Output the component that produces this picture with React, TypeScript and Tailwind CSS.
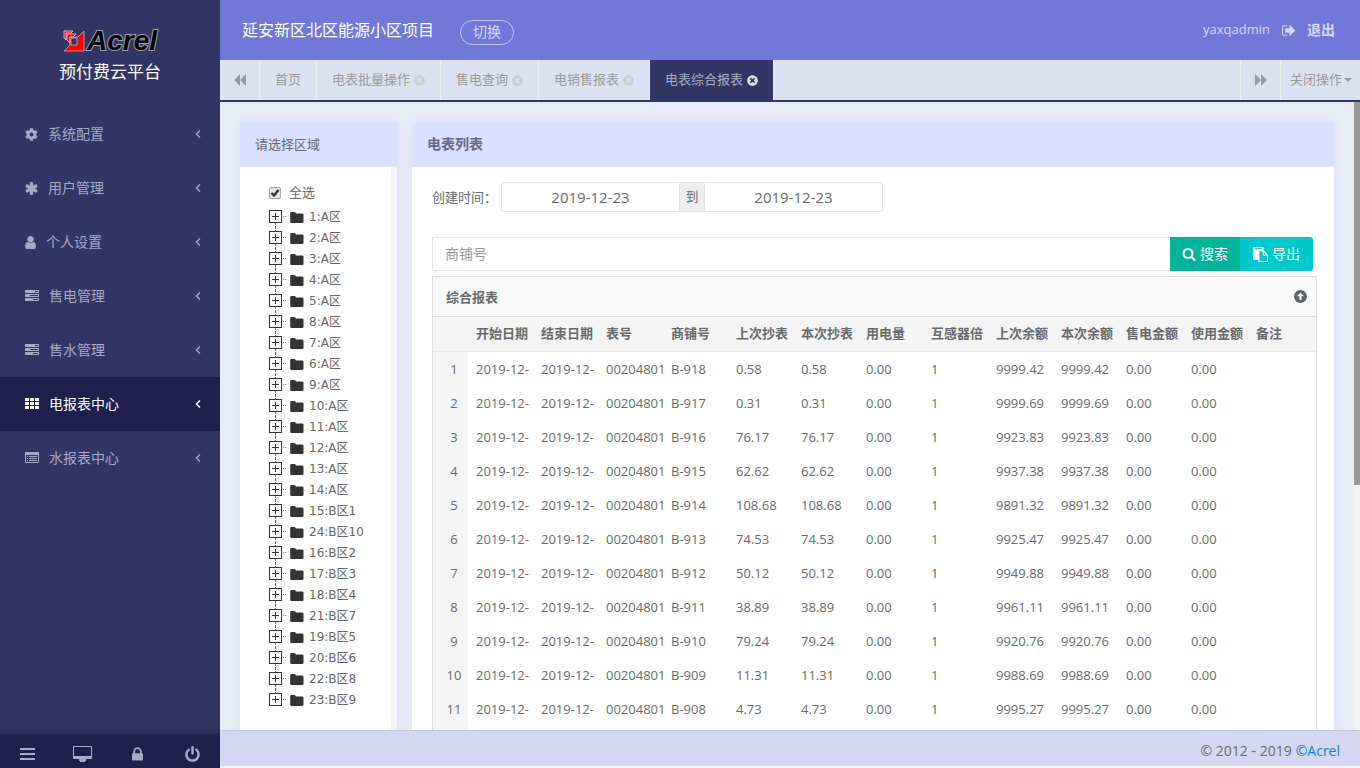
import { useState } from "react"
import type { ReactNode } from "react"
import { FaCog, FaTimesCircle } from "react-icons/fa"

const paths = {
  asterisk: "M1546 1050q46 26 59.5 77.5t-12.5 97.5l-64 110q-26 46-77.5 59.5t-97.5-12.5l-266-153v307q0 52-38 90t-90 38h-128q-52 0-90-38t-38-90v-307l-266 153q-46 26-97.5 12.5t-77.5-59.5l-64-110q-26-46-12.5-97.5t59.5-77.5l266-154-266-154q-46-26-59.5-77.5t12.5-97.5l64-110q26-46 77.5-59.5t97.5 12.5l266 153v-307q0-52 38-90t90-38h128q52 0 90 38t38 90v307l266-153q46-26 97.5-12.5t77.5 59.5l64 110q26 46 12.5 97.5t-59.5 77.5l-266 154z",
  user: "M1536 1399q0 109-62.5 187t-150.5 78h-854q-88 0-150.5-78t-62.5-187q0-85 8.5-160.5t31.5-152 58.5-131 94-89 134.5-34.5q131 128 313 128t313-128q76 0 134.5 34.5t94 89 58.5 131 31.5 152 8.5 160.5zm-256-887q0 159-112.5 271.5t-271.5 112.5-271.5-112.5-112.5-271.5 112.5-271.5 271.5-112.5 271.5 112.5 112.5 271.5z",
  tasks: "M1024 1408h640v-128h-640v128zm-384-512h1024v-128h-1024v128zm640-512h384v-128h-384v128zm512 832v256q0 26-19 45t-45 19h-1664q-26 0-45-19t-19-45v-256q0-26 19-45t45-19h1664q26 0 45 19t19 45zm0-512v256q0 26-19 45t-45 19h-1664q-26 0-45-19t-19-45v-256q0-26 19-45t45-19h1664q26 0 45 19t19 45zm0-512v256q0 26-19 45t-45 19h-1664q-26 0-45-19t-19-45v-256q0-26 19-45t45-19h1664q26 0 45 19t19 45z",
  lock: "M640 768h512v-192q0-106-75-181t-181-75-181 75-75 181v192zm832 96v576q0 40-28 68t-68 28h-960q-40 0-68-28t-28-68v-576q0-40 28-68t68-28h32v-192q0-184 132-316t316-132 316 132 132 316v192h32q40 0 68 28t28 68z",
  power: "M1664 896q0 156-61 298t-164 245-245 164-298 61-298-61-245-164-164-245-61-298q0-182 80.5-343t226.5-270q43-32 95.5-25t83.5 50q32 42 24.5 94.5t-49.5 84.5q-98 74-151.5 181t-53.5 228q0 104 40.5 198.5t109.5 163.5 163.5 109.5 198.5 40.5 198.5-40.5 163.5-109.5 109.5-163.5 40.5-198.5q0-121-53.5-228t-151.5-181q-42-32-49.5-84.5t24.5-94.5q31-43 84-50t95 25q146 109 226.5 270t80.5 343zm-640-768v640q0 52-38 90t-90 38-90-38-38-90v-640q0-52 38-90t90-38 90 38 38 90z",
  signOut: "M640 1440q0 4 1 20t.5 26.5-3 23.5-10 19.5-20.5 6.5h-320q-119 0-203.5-84.5t-84.5-203.5v-704q0-119 84.5-203.5t203.5-84.5h320q13 0 22.5 9.5t9.5 22.5q0 4 1 20t.5 26.5-3 23.5-10 19.5-20.5 6.5h-320q-66 0-113 47t-47 113v704q0 66 47 113t113 47h312l11.5 1 11.5 3 8 5.5 7 9 2 13.5zm928-544q0 26-19 45l-544 544q-19 19-45 19t-45-19-19-45v-288h-448q-26 0-45-19t-19-45v-384q0-26 19-45t45-19h448v-288q0-26 19-45t45-19 45 19l544 544q19 19 19 45z",
  search: "M1216 832q0-185-131.5-316.5t-316.5-131.5-316.5 131.5-131.5 316.5 131.5 316.5 316.5 131.5 316.5-131.5 131.5-316.5zm512 832q0 52-38 90t-90 38q-54 0-90-38l-343-342q-179 124-399 124-143 0-273.5-55.5t-225-150-150-225-55.5-273.5 55.5-273.5 150-225 225-150 273.5-55.5 273.5 55.5 225 150 150 225 55.5 273.5q0 220-124 399l343 343q37 37 37 90z",
  paste: "M768 1664h896v-640h-416q-40 0-68-28t-28-68v-416h-384v1152zm256-1440v-64q0-13-9.5-22.5t-22.5-9.5h-704q-13 0-22.5 9.5t-9.5 22.5v64q0 13 9.5 22.5t22.5 9.5h704q13 0 22.5-9.5t9.5-22.5zm256 672h299l-299-299v299zm512 128v672q0 40-28 68t-68 28h-960q-40 0-68-28t-28-68v-160h-544q-40 0-68-28t-28-68v-1344q0-40 28-68t68-28h1088q40 0 68 28t28 68v328q21 13 36 28l408 408q28 28 48 76t20 88z",
}

function Icon({ name, box = "0 0 1792 1792", className }: { name: keyof typeof paths; box?: string; className?: string }) {
  return (
    <svg viewBox={box} fill="currentColor" className={className}>
      <path d={paths[name]} />
    </svg>
  )
}

const TasksIcon = () => <Icon name="tasks" className="w-[14px] h-[14px]" />

const GridIcon = () => (
  <svg viewBox="0 0 14 12" fill="currentColor" className="w-[14px] h-3">
    {[0, 5, 10].map(x => [0, 4, 8].map(y => <rect key={`${x}-${y}`} x={x} y={y} width="4" height="3" />))}
  </svg>
)

const ListIcon = () => (
  <svg viewBox="0 0 14 12" fill="currentColor" className="w-[14px] h-3">
    <path fillRule="evenodd" d="M1 0h12a1 1 0 0 1 1 1v9a1 1 0 0 1-1 1H1a1 1 0 0 1-1-1V1a1 1 0 0 1 1-1zM1 3v7h12V3z" />
    <path d="M2 4h1v1H2zM4 4h8v1H4zM2 6h1v1H2zM4 6h8v1H4zM2 8h1v1H2zM4 8h8v1H4z" />
  </svg>
)

const menu: { icon: ReactNode; label: string }[] = [
  { icon: <FaCog className="w-[13px] h-[13px]" />, label: "系统配置" },
  { icon: <Icon name="asterisk" box="180 128 1432 1536" className="w-[13px] h-[13px]" />, label: "用户管理" },
  { icon: <Icon name="user" box="256 128 1280 1536" className="w-[11px] h-[13px]" />, label: "个人设置" },
  { icon: <TasksIcon />, label: "售电管理" },
  { icon: <TasksIcon />, label: "售水管理" },
  { icon: <GridIcon />, label: "电报表中心" },
  { icon: <ListIcon />, label: "水报表中心" },
]

const tabs = ["首页", "电表批量操作", "售电查询", "电销售报表", "电表综合报表"]

const areas = [
  "1:A区", "2:A区", "3:A区", "4:A区", "5:A区", "8:A区", "7:A区", "6:A区",
  "9:A区", "10:A区", "11:A区", "12:A区", "13:A区", "14:A区", "15:B区1", "24:B区10",
  "16:B区2", "17:B区3", "18:B区4", "21:B区7", "19:B区5", "20:B区6", "22:B区8", "23:B区9",
]

const columns = [
  "开始日期", "结束日期", "表号", "商铺号", "上次抄表", "本次抄表", "用电量",
  "互感器倍", "上次余额", "本次余额", "售电金额", "使用金额", "备注",
]

const readings = [
  { shop: "B-918", meter: "0.58", balance: "9999.42" },
  { shop: "B-917", meter: "0.31", balance: "9999.69" },
  { shop: "B-916", meter: "76.17", balance: "9923.83" },
  { shop: "B-915", meter: "62.62", balance: "9937.38" },
  { shop: "B-914", meter: "108.68", balance: "9891.32" },
  { shop: "B-913", meter: "74.53", balance: "9925.47" },
  { shop: "B-912", meter: "50.12", balance: "9949.88" },
  { shop: "B-911", meter: "38.89", balance: "9961.11" },
  { shop: "B-910", meter: "79.24", balance: "9920.76" },
  { shop: "B-909", meter: "11.31", balance: "9988.69" },
  { shop: "B-908", meter: "4.73", balance: "9995.27" },
]

function Sidebar() {
  const [active, setActive] = useState(5)

  return (
    <aside className="w-[220px] shrink-0 flex flex-col bg-[#323665] text-[#a7abc8]">
      <div className="h-[107px] pt-6 flex flex-col items-center">
        <div className="flex items-center gap-[2px]">
          <svg viewBox="0 0 22 22" className="w-[22px] h-[22px]">
            <path d="M1 1h9L8 3H3v7L1 8z" fill="#f00" stroke="#e8d8e0" strokeWidth="0.8" />
            <path d="M4 4h9l-3 3H7v6l-3-3z" fill="#f00" stroke="#e8d8e0" strokeWidth="0.8" />
            <path fillRule="evenodd" d="M21 1v20H1l6-6V7h8zM8 8v7h6V8z" fill="#f00" stroke="#e8d8e0" strokeWidth="0.6" />
          </svg>
          <span className="font-['Liberation_Sans',sans-serif] text-[28px] leading-[34px] font-bold italic text-black [-webkit-text-stroke:2px_#9fa1ae] [paint-order:stroke_fill]">
            Acrel
          </span>
        </div>
        <div className="text-[17px] leading-7 text-white">预付费云平台</div>
      </div>
      <nav className="flex-1">
        {menu.map((m, i) => (
          <a
            key={m.label}
            href="#"
            onClick={() => setActive(i)}
            className={`h-[54px] pl-[25px] pr-[19px] flex items-center gap-[10px] text-sm ${i === active ? "bg-[#1f204b] text-white" : ""}`}
          >
            {m.icon}
            <span className="flex-1">{m.label}</span>
            <svg viewBox="0 0 6 8" fill="none" stroke="currentColor" strokeWidth="1.4" className="w-[6px] h-2">
              <path d="M5 0.5 1.5 4 5 7.5" />
            </svg>
          </a>
        ))}
      </nav>
      <div className="h-[39px] border-t-[5px] border-[#2d3058] bg-[#1f204b] pt-[6px] grid grid-cols-4">
        <button aria-label="菜单" className="flex items-center justify-center">
          <svg viewBox="0 0 15 12" fill="currentColor" className="w-[15px] h-3">
            <path d="M0 0h15v2H0zM0 5h15v2H0zM0 10h15v2H0z" />
          </svg>
        </button>
        <button aria-label="桌面" className="flex items-center justify-center">
          <svg viewBox="0 0 19 16" fill="currentColor" className="w-[19px] h-4">
            <path fillRule="evenodd" d="M1 0h17a1 1 0 0 1 1 1v11a1 1 0 0 1-1 1h-5v2h-1v1H7v-1H6v-2H1a1 1 0 0 1-1-1V1a1 1 0 0 1 1-1zM1 1v9h17V1z" />
          </svg>
        </button>
        <button aria-label="锁定" className="flex items-center justify-center">
          <Icon name="lock" className="w-[17px] h-[17px]" />
        </button>
        <button aria-label="关机" className="flex items-center justify-center">
          <Icon name="power" className="w-[17px] h-[17px]" />
        </button>
      </div>
    </aside>
  )
}

function AreaPanel() {
  return (
    <section className="w-[158px] shrink-0 flex flex-col rounded-t-xs bg-white shadow-[0_0_12px_#dcdff8]">
      <h2 className="h-[45px] shrink-0 pl-[15px] pt-px flex items-center border-b border-[#e7eaec] rounded-t-xs bg-[#dae0ff] text-[13px]">请选择区域</h2>
      <div className="flex-1 flex border-r border-[#dfe2f8]">
        <div className="flex-1 pl-[29px] pt-4">
          <label className="h-5 flex items-center gap-2 text-[13px]">
            <span className="relative w-3 h-3">
              <input type="checkbox" defaultChecked className="peer block appearance-none w-3 h-3 rounded-xs border border-[#a5a5a5] bg-[#e4e4e4]" />
              <svg viewBox="0 0 12 12" fill="none" stroke="#333" strokeWidth="2.4" className="absolute inset-0 pointer-events-none hidden peer-checked:block">
                <path d="M2.500 6 5 8.500 9.500 3" />
              </svg>
            </span>
            全选
          </label>
          <ul className="pt-[3px] font-['DejaVu_Sans','Noto_Sans_CJK_SC',sans-serif] text-xs text-[#666]">
            {areas.map((a, i) => (
              <li key={a} className="h-[21px] flex items-center">
                <svg viewBox="0 0 17 21" className="w-[17px] h-[21px]" fill="none" stroke="#333">
                  <rect x="0.5" y="4.500" width="12" height="12" />
                  <path d="M6.500 7v7M3 10.500h7" />
                  {i > 0 && <path d="M6.500 0v4" stroke="#666" strokeDasharray="2 1" />}
                  {i < areas.length - 1 && <path d="M6.500 17v4" stroke="#666" strokeDasharray="2 1" />}
                  <path d="M14 10.500h3" stroke="#888" strokeDasharray="1 1" />
                </svg>
                <svg viewBox="0 0 14 12" className="w-[14px] h-3 ml-1 mr-[5px]" fill="#333">
                  <path d="M1.200 1h3.600q.8 0 1 1.500H12.200a1.300 1.300 0 0 1 1.300 1.300V10.700A1.300 1.300 0 0 1 12.200 12H1.500A1.300 1.300 0 0 1 .2 10.700V2a1 1 0 0 1 1-1z" />
                </svg>
                {a}
              </li>
            ))}
          </ul>
        </div>
        <div className="w-[6px] bg-[#f3f3f4]" />
      </div>
    </section>
  )
}

function ReportTable() {
  return (
    <div className="mr-[-4px] mt-[5px] flex-1 flex flex-col border border-b-0 border-[#ddd]">
      <div className="h-10 shrink-0 pl-[13px] pr-[9px] flex items-center justify-between border-b border-[#ddd] bg-[#f9f9f9]">
        <h3 className="text-[13px] font-bold pt-[2px]">综合报表</h3>
        <button aria-label="收起">
          <svg viewBox="0 0 13 13" className="w-[13px] h-[13px]">
            <circle cx="6.500" cy="6.500" r="6.500" fill="#5f6368" />
            <path d="M6.500 2.500 10 6.200H7.500V10h-2V6.200H3z" fill="#fff" />
          </svg>
        </button>
      </div>
      <table className="w-full table-fixed text-[13px]">
        <thead>
          <tr className="h-[34px] bg-[#f4f4f4] border-b border-[#e7e7e7]">
            <th className="w-[35px]" />
            {columns.map(c => (
              <th key={c} className="w-[65px] pl-2 text-left font-bold whitespace-nowrap">{c}</th>
            ))}
            <th />
          </tr>
        </thead>
        <tbody>
          {readings.map((r, i) => {
            const cells = [
              "2019-12-", "2019-12-", "00204801", r.shop, r.meter, r.meter, "0.00",
              "1", r.balance, r.balance, "0.00", "0.00", "",
            ]
            return (
              <tr key={r.shop} className="h-[34px] leading-[34px]">
                <td className="bg-[#f4f4f4] pl-[7px] text-center">{i + 1}</td>
                {cells.map((c, n) => (
                  <td key={n} className="pl-2 whitespace-nowrap overflow-hidden">{c}</td>
                ))}
                <td />
              </tr>
            )
          })}
        </tbody>
      </table>
      <div className="flex-1 w-[35px] bg-[#f4f4f4]" />
    </div>
  )
}

function MeterPanel() {
  return (
    <section className="flex-1 min-w-0 flex flex-col rounded-t-xs bg-white shadow-[0_0_12px_#dcdff8]">
      <h2 className="h-[45px] shrink-0 pl-[15px] flex items-center border-b border-[#e7eaec] rounded-t-xs bg-[#dae0ff] text-sm font-bold text-[#65688a]">电表列表</h2>
      <div className="flex-1 flex flex-col pl-5 pr-[21px] pt-[15px]">
        <div className="flex items-center text-[13px]">
          <label htmlFor="start" className="w-[69px] whitespace-nowrap pt-[2px]">创建时间：</label>
          <input id="start" defaultValue="2019-12-23" className="w-[179px] h-[30px] rounded-l-[3px] border border-[#e5e6e7] text-center text-[15px]" />
          <label htmlFor="end" className="w-6 h-[30px] flex items-center justify-center border-y border-[#e5e6e7] bg-[#eee]">到</label>
          <input id="end" defaultValue="2019-12-23" className="w-[179px] h-[30px] rounded-r-[3px] border border-[#e5e6e7] text-center text-[15px]" />
        </div>
        <div className="mt-[25px] flex h-[34px] text-sm">
          <input aria-label="商铺号" placeholder="商铺号" className="flex-1 min-w-0 px-3 border border-r-0 border-[#e5e6e7] placeholder:text-[#999]" />
          <button className="w-[70px] flex items-center justify-center gap-1 bg-[#00b499] text-white">
            <Icon name="search" className="w-[14px] h-[14px]" />
            搜索
          </button>
          <button className="w-[73px] flex items-center justify-center gap-1 rounded-r-[3px] bg-[#00c9cc] text-white">
            <Icon name="paste" className="w-[15px] h-[15px]" />
            导出
          </button>
        </div>
        <ReportTable />
      </div>
    </section>
  )
}

export default function App() {
  const [tab, setTab] = useState(4)

  return (
    <div className="h-screen flex overflow-hidden bg-[#f3f3f4] font-['Open_Sans','Noto_Sans_CJK_SC',sans-serif] text-[#676a6c]">
      <Sidebar />
      <div className="flex-1 min-w-0 flex flex-col">
        <header className="h-[60px] shrink-0 pl-[22px] pr-[25px] flex items-center bg-[#7078d8] text-[#d5d8fb]">
          <h1 className="text-base text-white">延安新区北区能源小区项目</h1>
          <button className="ml-[26px] mt-1 h-[25px] px-3 flex items-center rounded-full border border-[#c5c9f5] text-sm">切换</button>
          <div className="ml-auto flex items-center text-[13px]">
            <span>yaxqadmin</span>
            <a href="#" className="ml-3 flex items-center gap-[10px] text-sm font-bold">
              <Icon name="signOut" className="w-[15px] h-[15px]" />
              退出
            </a>
          </div>
        </header>

        <div className="h-[42px] shrink-0 flex border-b-2 border-[#323665] bg-[#dde2f2] text-[13px] text-[#999]">
          <button aria-label="向左" className="w-10 flex items-center justify-center border-r border-[#eee]">
            <svg viewBox="0 0 12 12" fill="currentColor" className="w-3 h-3"><path d="M6 0v12L0 6zM12 0v12L6 6z" /></svg>
          </button>
          {tabs.map((t, i) => (
            <button
              key={t}
              onClick={() => setTab(i)}
              className={`px-[15px] flex items-center gap-1 border-r border-[#eee] ${i === tab ? "bg-[#323665] text-[#a7b1c2]" : ""}`}
            >
              {t}
              {i > 0 && <FaTimesCircle className={`w-[11px] h-[11px] ${i === tab ? "text-[#ddd]" : "text-[#ccc]"}`} />}
            </button>
          ))}
          <button aria-label="向右" className="ml-auto w-[41px] flex items-center justify-center border-x border-[#eee]">
            <svg viewBox="0 0 12 12" fill="currentColor" className="w-3 h-3"><path d="M0 0l6 6-6 6zM6 0l6 6-6 6z" /></svg>
          </button>
          <button className="w-[79px] pl-[9px] flex items-center gap-[2px]">
            关闭操作
            <svg viewBox="0 0 8 4" fill="currentColor" className="w-2 h-1"><path d="M0 0h8L4 4z" /></svg>
          </button>
        </div>

        <main className="flex-1 min-h-0 flex bg-[#e8ecf7]">
          <div className="flex-1 min-w-0 flex gap-[14px] pl-5 pr-5 pt-5 overflow-hidden">
            <AreaPanel />
            <MeterPanel />
          </div>
          <div className="w-[6px] bg-[#f3f3f4]">
            <div className="h-[61%] bg-[#999]" />
          </div>
        </main>

        <footer className="h-9 mb-[2px] shrink-0 pr-5 pt-1 flex items-center justify-end gap-1 border-t border-[#c5c7e2] bg-[#d5d6f1] text-sm">
          © 2012 - 2019 <a href="#" className="text-[#0a84c1]">©Acrel</a>
        </footer>
      </div>
    </div>
  )
}
